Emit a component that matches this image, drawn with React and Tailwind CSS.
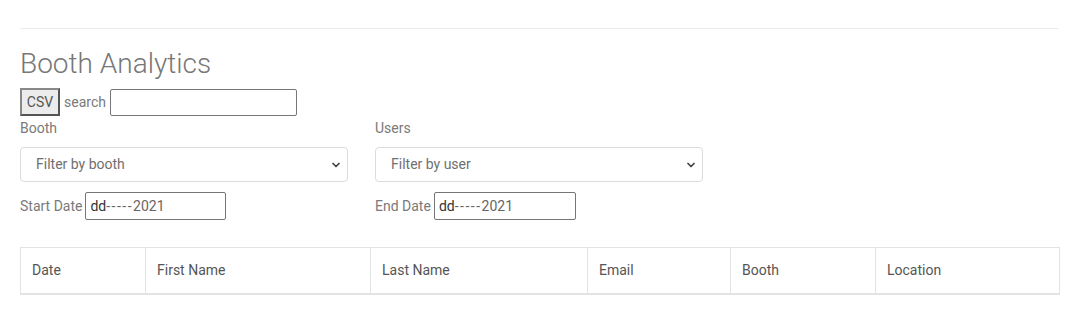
import React from 'react';
import { FiChevronDown } from 'react-icons/fi';

const columns = [
    { label: 'Date', w: 'w-[124px]' },
    { label: 'First Name', w: 'w-[225px]' },
    { label: 'Last Name', w: 'w-[217px]' },
    { label: 'Email', w: 'w-[143px]' },
    { label: 'Booth', w: 'w-[145px]' },
    { label: 'Location', w: 'flex-1' },
];

const Select = ({ placeholder }) => (
    <div className="w-[328px] h-[35px] border border-[#dcdcdc] rounded-[4px] flex items-center justify-between pl-[15px] pr-[5px] text-[14px] text-[#707070] bg-white">
        <span>{placeholder}</span>
        <FiChevronDown size={12} strokeWidth={3.5} className="text-[#444]" />
    </div>
);

const DateField = ({ label, width }) => (
    <div className="flex items-center gap-[3px] text-[14px] text-[#7a7a7a]">
        <span>{label}</span>
        <div className={`${width} h-[28px] border border-[#767676] rounded-[2px] flex items-center px-[4px] text-[14px] text-[#666]`}>
            <span className="text-[#333]">dd</span><span className="tracking-[1.5px]">-----</span>2021
        </div>
    </div>
);

export default function App() {
    return (
        <div className="w-[1079px] h-[327px] bg-white px-[20px] pt-[28px]" style={{ fontFamily: 'Roboto, "Open Sans", sans-serif' }}>
            <div className="w-[1038px] border-t border-[#ebebeb]" />

            <h1 className="mt-[18px] text-[28px] leading-[34px] font-light text-[#777]">Booth Analytics</h1>

            <div className="mt-[7px] flex items-center gap-[4px] h-[28px]">
                <button className="h-[28px] w-[40px] border-2 border-[#555] border-t-[#888] border-l-[#888] bg-[#ececec] text-[14px] text-[#555]">CSV</button>
                <span className="text-[14px] text-[#7a7a7a]">search</span>
                <div className="w-[187px] h-[27px] border border-[#767676] rounded-[2px]" />
            </div>

            <div className="flex gap-[27px]">
                <div className="w-[328px]">
                    <div className="mt-[4px] h-[16px] text-[14px] leading-[16px] text-[#7a7a7a]">Booth</div>
                    <div className="mt-[11px]"><Select placeholder="Filter by booth" /></div>
                    <div className="mt-[10px]"><DateField label="Start Date" width="w-[141px]" /></div>
                </div>
                <div className="w-[328px]">
                    <div className="mt-[4px] h-[16px] text-[14px] leading-[16px] text-[#7a7a7a]">Users</div>
                    <div className="mt-[11px]"><Select placeholder="Filter by user" /></div>
                    <div className="mt-[10px]"><DateField label="End Date" width="w-[142px]" /></div>
                </div>
            </div>

            <div className="mt-[27px] w-[1040px] h-[48px] border border-[#e3e3e3] border-b-2 flex">
                {columns.map((c, i) => (
                    <div key={c.label} className={`${c.w} flex items-center px-[11px] text-[14px] text-[#555] ${i > 0 ? 'border-l border-[#e3e3e3]' : ''}`}>
                        {c.label}
                    </div>
                ))}
            </div>
        </div>
    );
}
